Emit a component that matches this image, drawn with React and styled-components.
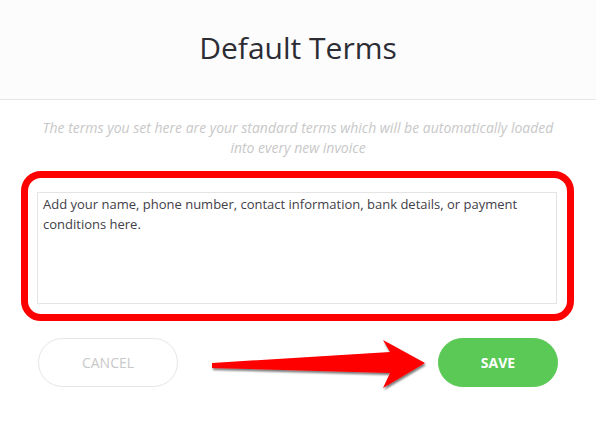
import React from "react";
import styled, { createGlobalStyle } from "styled-components";

const Global = createGlobalStyle`
  html, body { margin: 0; padding: 0; background: #ffffff; }
  body { font-family: "Open Sans", "Liberation Sans", sans-serif; }
  * { box-sizing: border-box; }
`;

const Page = styled.div`
  position: relative;
  width: 596px;
  height: 426px;
  overflow: hidden;
  background: #ffffff;
`;

const Header = styled.header`
  height: 100px;
  background: #fcfcfc;
  border-bottom: 1px solid #e6e6e6;
  display: flex;
  align-items: center;
  justify-content: center;
  padding-bottom: 5px;
`;

const Title = styled.h1`
  margin: 0;
  font-family: "Open Sans", sans-serif;
  font-weight: 400;
  font-size: 30px;
  color: #2c2c34;
`;

const Body = styled.main`
  display: flex;
  flex-direction: column;
  align-items: center;
  padding-top: 18px;
`;

const Note = styled.p`
  margin: 0;
  width: 520px;
  text-align: center;
  font-family: "Open Sans", sans-serif;
  font-style: italic;
  font-size: 14px;
  line-height: 20px;
  color: #c8c8c8;
`;

const Highlight = styled.div`
  margin-top: 13px;
  margin-left: -1px;
  width: 553px;
  border: 7px solid #ff0000;
  border-radius: 20px;
  padding: 14px 10px 10px 9px;
`;

const TermsInput = styled.textarea`
  display: block;
  width: 520px;
  height: 112px;
  margin: 0;
  border: 1px solid #e4e4e4;
  border-radius: 0;
  padding: 1px 5px;
  resize: none;
  outline: none;
  font-family: "Open Sans", sans-serif;
  font-size: 13px;
  line-height: 20px;
  color: #3f4048;
  background: #ffffff;
`;

const Actions = styled.div`
  margin-top: 17px;
  width: 520px;
  display: flex;
  justify-content: space-between;
`;

const Button = styled.button`
  height: 49px;
  width: ${(p) => (p.$primary ? "120px" : "140px")};
  border-radius: 25px;
  border: 1px solid ${(p) => (p.$primary ? "#5bc955" : "#e6e6e6")};
  background: ${(p) => (p.$primary ? "#5bc955" : "#ffffff")};
  color: ${(p) => (p.$primary ? "#ffffff" : "#c8c8c8")};
  font-family: "Open Sans", sans-serif;
  font-size: 14px;
  font-weight: ${(p) => (p.$primary ? 700 : 400)};
  text-transform: uppercase;
  cursor: pointer;
`;

const Arrow = styled.svg`
  position: absolute;
  left: 0;
  top: 0;
  pointer-events: none;
`;

export default function App() {
  return (
    <Page>
      <Global />
      <Header>
        <Title>Default Terms</Title>
      </Header>
      <Body>
        <Note>
          The terms you set here are your standard terms which will be automatically loaded into every new invoice
        </Note>
        <Highlight>
          <TermsInput
            defaultValue="Add your name, phone number, contact information, bank details, or payment conditions here."
          />
        </Highlight>
        <Actions>
          <Button>Cancel</Button>
          <Button $primary>Save</Button>
        </Actions>
      </Body>
      <Arrow width="596" height="426" viewBox="0 0 596 426">
        <defs>
          <filter id="sh" x="-10%" y="-30%" width="120%" height="160%">
            <feGaussianBlur in="SourceAlpha" stdDeviation="1.2" />
            <feOffset dx="1" dy="2" result="b" />
            <feComponentTransfer>
              <feFuncA type="linear" slope="0.55" />
            </feComponentTransfer>
            <feMerge>
              <feMergeNode />
              <feMergeNode in="SourceGraphic" />
            </feMerge>
          </filter>
        </defs>
        <polygon
          filter="url(#sh)"
          fill="#ff0000"
          points="212,363 390,352 383,340 425,363 383,388 390,373 212,368"
        />
      </Arrow>
    </Page>
  );
}
